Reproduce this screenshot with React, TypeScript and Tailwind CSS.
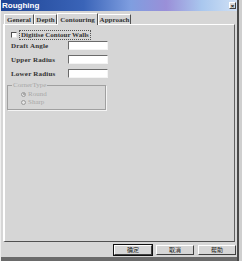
import React from 'react'

const txt = "font-['Liberation_Serif',serif] text-[7px] leading-[8px] text-[#1a1a1a]"

const Field = ({ label }: { label: string }) => (
  <div className="flex items-center h-[9px]">
    <span className={`${txt} w-[57px] font-bold tracking-[0.2px] text-[#333]`}>{label}</span>
    <div className="w-[40px] h-[9px] bg-white border-t border-l border-t-[#6a6a6a] border-l-[#6a6a6a] border-b border-r border-b-[#f4f4f4] border-r-[#f4f4f4]" />
  </div>
)

const Tab = ({ label, active = false, w }: { label: string; active?: boolean; w: string }) => (
  <div
    className={`${w} flex items-center justify-center border-t border-l border-r border-t-white border-l-white border-r-[#505050] bg-[#d6d6d6] ${
      active ? 'h-[12px] -mb-[1px] z-10 relative' : 'h-[10px]'
    }`}
  >
    <span className={`${txt} font-bold text-[#333]`}>{label}</span>
  </div>
)

const Radio = ({ label, checked = false }: { label: string; checked?: boolean }) => (
  <div className="flex items-center gap-[2px] h-[8px]">
    <div className="w-[5px] h-[5px] rounded-full border border-[#9a9a9a] bg-[#e4e4e4] flex items-center justify-center">
      {checked && <div className="w-[2px] h-[2px] rounded-full bg-[#9a9a9a]" />}
    </div>
    <span className={`${txt} text-[#a8a8a8]`}>{label}</span>
  </div>
)

const Btn = ({ label, primary = false }: { label: string; primary?: boolean }) => (
  <div
    className={`w-[38px] h-[10px] flex items-center justify-center bg-[#d6d6d6] border border-t-white border-l-white border-b-[#404040] border-r-[#404040] ${
      primary ? 'outline outline-1 outline-[#101010]' : ''
    }`}
  >
    <span className="font-['Noto_Sans_CJK_SC',sans-serif] text-[6px] leading-[7px] text-[#222]">{label}</span>
  </div>
)

export default function App() {
  return (
    <div className="w-[242px] h-[261px] bg-[#cfcfcf] flex">
      <div className="w-[239px] h-full flex flex-col bg-[#d6d6d6] border-r-[2px] border-r-[#4a4a4a] border-l border-l-[#eeeeee]">
        {/* Title bar */}
        <div className="h-[11px] flex items-center justify-between pl-[1px] pr-[1px] bg-[linear-gradient(90deg,#1f4595_0%,#3a64b8_35%,#7f9ee0_55%,#9a8fd8_70%,#a9c7ee_85%,#cfe0f5_100%)]">
          <span className="font-['Liberation_Sans',sans-serif] font-bold text-[8px] leading-[9px] text-white">Roughing</span>
          <div className="w-[7px] h-[7px] bg-[#d8d8d8] border border-t-white border-l-white border-b-[#404040] border-r-[#404040] flex items-center justify-center">
            <span className="font-['Liberation_Sans',sans-serif] font-bold text-[6px] leading-[6px] text-black">×</span>
          </div>
        </div>

        {/* Tabs */}
        <div className="flex items-end h-[12px] pl-[3px] mt-[1px]">
          <Tab label="General" w="w-[30px]" />
          <Tab label="Depth" w="w-[23px]" />
          <Tab label="Contouring" w="w-[41px]" active />
          <Tab label="Approach" w="w-[33px]" />
        </div>

        {/* Panel */}
        <div className="flex-1 mx-[2px] border-t border-l-[2px] border-t-white border-l-white border-r border-r-[#606060] border-b border-b-[#505050] flex flex-col pl-[6px] pt-[6px]">
          <div className="flex items-center gap-[3px] h-[7px]">
            <div className="w-[6px] h-[6px] bg-white border border-t-[#505050] border-l-[#505050] border-b-[#e8e8e8] border-r-[#e8e8e8]" />
            <span className={`${txt} font-bold px-[1px] text-[#333] outline outline-1 outline-dotted outline-[#555]`}>Digitise Contour Walls</span>
          </div>
          <div className="flex flex-col gap-[5px] mt-[3px]">
            <Field label="Draft Angle" />
            <Field label="Upper Radius" />
            <Field label="Lower Radius" />
          </div>
          <div className="relative mt-[7px] -ml-[4px] w-[99px] h-[25px] border border-[#a0a0a0] shadow-[1px_1px_0_#f4f4f4] flex flex-col pl-[13px] pt-[4px]">
            <span className={`${txt} absolute -top-[5px] left-[4px] bg-[#d6d6d6] px-[1px] text-[#a8a8a8]`}>CornerType</span>
            <Radio label="Round" checked />
            <Radio label="Sharp" />
          </div>
        </div>

        {/* Buttons */}
        <div className="h-[19px] flex items-center justify-end gap-[4px] pr-[1px] border-b-[4px] border-b-[#6a6a6a]">
          <Btn label="确定" primary />
          <Btn label="取消" />
          <Btn label="帮助" />
        </div>
      </div>
    </div>
  )
}
